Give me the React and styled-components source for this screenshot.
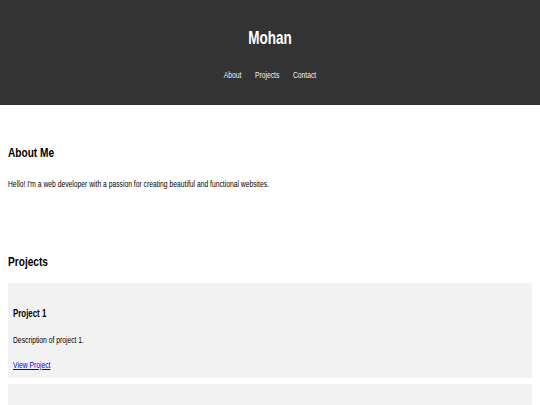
import React from "react";
import styled, { createGlobalStyle, css } from "styled-components";

const GlobalStyle = createGlobalStyle`
  html, body {
    margin: 0;
    padding: 0;
    background: #ffffff;
    overflow: hidden;
  }
  body {
    font-family: "Liberation Sans", Arial, sans-serif;
    color: #000000;
  }
`;

const narrow = (origin = "left") => css`
  transform: scaleX(0.75);
  transform-origin: ${origin} center;
`;

const Header = styled.header`
  background: #333333;
  color: #ffffff;
  padding: 28px 0 25px;
  text-align: center;
`;

const Title = styled.h1`
  margin: 0;
  font-size: 18px;
  line-height: 21px;
  font-weight: 700;
  ${narrow("center")}
`;

const Nav = styled.nav`
  margin-top: 21px;
  ${narrow("center")}
`;

const NavList = styled.ul`
  list-style: none;
  margin: 0;
  padding: 0;
  display: flex;
  justify-content: center;
  gap: 18px;
`;

const NavLink = styled.a`
  display: block;
  font-size: 9px;
  line-height: 10px;
  text-decoration: none;
  outline: none;
  &,
  &:link,
  &:visited,
  &:focus {
    color: #f2f2f2;
  }
`;

const Main = styled.main`
  padding: 40px 8px 0;
`;

const Section = styled.section`
  margin-bottom: ${(p) => p.$after || 0}px;
`;

const SectionTitle = styled.h2`
  margin: 0 0 ${(p) => p.$gap}px;
  font-size: 13.5px;
  line-height: 16px;
  font-weight: 700;
  ${narrow()}
`;

const Text = styled.p`
  margin: ${(p) => p.$top || 0}px 0 0;
  font-size: 9px;
  line-height: 10px;
  ${narrow()}
`;

const CardList = styled.div`
  display: flex;
  flex-direction: column;
  gap: 6px;
`;

const Card = styled.article`
  background: #f2f2f2;
  padding: 24px 4px 8px 4.5px;
`;

const CardTitle = styled.h3`
  margin: 0;
  font-size: 10.5px;
  line-height: 12px;
  font-weight: 700;
  ${narrow()}
`;

const Link = styled.a`
  color: #0000ee;
  text-decoration: underline;
`;

const projects = [
  { title: "Project 1", desc: "Description of project 1." },
  { title: "Project 2", desc: "Description of project 2." },
];

export default function App() {
  return (
    <>
      <GlobalStyle />
      <Header>
        <Title>Mohan</Title>
        <Nav>
          <NavList>
            <li><NavLink href="#about">About</NavLink></li>
            <li><NavLink href="#projects">Projects</NavLink></li>
            <li><NavLink href="#contact">Contact</NavLink></li>
          </NavList>
        </Nav>
      </Header>
      <Main>
        <Section id="about" $after={65}>
          <SectionTitle $gap={18}>About Me</SectionTitle>
          <Text>
            Hello! I'm a web developer with a passion for creating beautiful and functional websites.
          </Text>
        </Section>
        <Section id="projects">
          <SectionTitle $gap={13}>Projects</SectionTitle>
          <CardList>
            {projects.map((p) => (
              <Card key={p.title}>
                <CardTitle>{p.title}</CardTitle>
                <Text $top={16}>{p.desc}</Text>
                <Text $top={15}>
                  <Link href="#">View Project</Link>
                </Text>
              </Card>
            ))}
          </CardList>
        </Section>
      </Main>
    </>
  );
}
